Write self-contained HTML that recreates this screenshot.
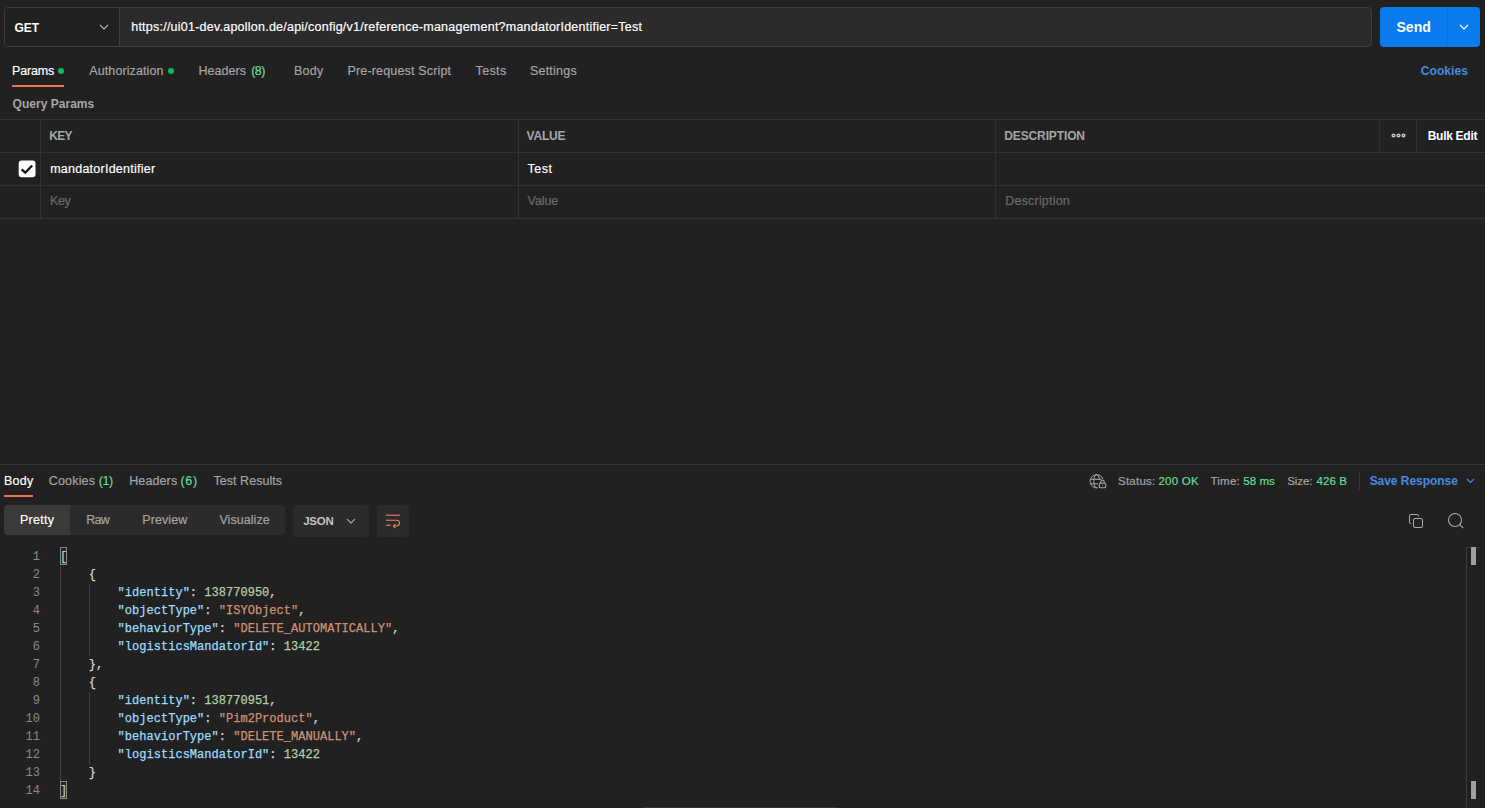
<!DOCTYPE html>
<html lang="en"><head><meta charset="utf-8"><title>Postman</title>
<style>
*{box-sizing:border-box;margin:0;padding:0}
html,body{width:1485px;height:808px;background:#212121;overflow:hidden}
body{position:relative;font-family:"Liberation Sans", sans-serif;font-size:12px;color:#ffffff}
.t{position:absolute;white-space:pre;line-height:20px;height:20px}
.a{position:absolute}
.hl{position:absolute;height:1px;background:#323232}
.vl{position:absolute;width:1px;background:#323232}
.ln{position:absolute;left:0;width:40px;text-align:right;font-family:"Liberation Mono", monospace;font-size:12px;line-height:18px;height:18px;color:#8a8a8a}
.cl{position:absolute;white-space:pre;font-family:"Liberation Mono", monospace;font-size:12px;line-height:18px;height:18px;letter-spacing:0.025px;-webkit-text-stroke-width:0.25px}
.ig{position:absolute;width:1px;background:#404040}
.bm{position:absolute;width:7px;height:18px;border:1px solid #888;background:rgba(0,100,0,.1)}
svg{position:absolute;overflow:visible}
</style></head>
<body>

<!-- method selector + url bar -->
<div class="a" style="left:4px;top:7px;width:1368px;height:40px;border:1px solid #3d3d3d;border-radius:4px;background:#2b2b2b"></div>
<div class="a" style="left:5px;top:8px;width:114px;height:38px;border-radius:3px 0 0 3px;background:#212121"></div>
<div class="vl" style="left:119px;top:8px;height:38px;background:#3d3d3d"></div>
<svg style="left:99px;top:24px" width="10" height="7" viewBox="0 0 10 7"><path d="M1 1 L5 5 L9 1" fill="none" stroke="#b8b8b8" stroke-width="1.1"/></svg>
<!-- send button -->
<div class="a" style="left:1380px;top:7px;width:100px;height:40px;border-radius:4px;background:#097bed"></div>
<div class="vl" style="left:1447px;top:7px;height:40px;background:#0a72dc"></div>
<svg style="left:1459px;top:24px" width="10" height="7" viewBox="0 0 10 7"><path d="M1 1 L5 5 L9 1" fill="none" stroke="#ffffff" stroke-width="1.15"/></svg>
<!-- request tabs -->
<div class="a" style="left:58px;top:67.9px;width:6.2px;height:6.2px;border-radius:50%;background:#0cbb52"></div>
<div class="a" style="left:168px;top:67.9px;width:6.2px;height:6.2px;border-radius:50%;background:#0cbb52"></div>
<div class="a" style="left:12px;top:85px;width:52px;height:2px;background:#e8764d"></div>
<!-- params table -->
<div class="hl" style="left:0;top:119px;width:1485px"></div>
<div class="hl" style="left:0;top:152px;width:1485px"></div>
<div class="hl" style="left:0;top:185px;width:1485px"></div>
<div class="hl" style="left:0;top:218px;width:1485px"></div>
<div class="vl" style="left:40px;top:119px;height:99px"></div>
<div class="vl" style="left:518px;top:119px;height:99px"></div>
<div class="vl" style="left:995px;top:119px;height:99px"></div>
<div class="vl" style="left:1379px;top:119px;height:33px"></div>
<div class="vl" style="left:1416px;top:119px;height:33px"></div>
<svg style="left:1390.7px;top:133.1px" width="15" height="5" viewBox="0 0 15 5"><g fill="none" stroke="#c4c4c4" stroke-width="1.5"><circle cx="2.5" cy="2.5" r="1.35"/><circle cx="7.5" cy="2.5" r="1.35"/><circle cx="12.5" cy="2.5" r="1.35"/></g></svg>
<!-- checkbox -->
<svg style="left:18px;top:160px" width="19" height="19" viewBox="0 0 19 19"><rect x="0.7" y="0.6" width="16.8" height="16.7" rx="3" fill="#ffffff"/><path d="M3.6 9.3 L7.3 12.6 L14.2 5.5" fill="none" stroke="#151515" stroke-width="2.3"/></svg>
<!-- pane divider -->
<div class="hl" style="left:0;top:464px;width:1485px;background:#363636"></div>
<!-- response tabs -->
<div class="a" style="left:4px;top:495px;width:29px;height:2px;background:#e8764d"></div>
<!-- globe + lock -->
<svg style="left:1089px;top:473px" width="18" height="16" viewBox="0 0 18 16"><g fill="none" stroke="#a8a8a8" stroke-width="1.1">
<g transform="translate(0 0.4)" stroke-width="1"><path d="M8.85 14.4 A6.6 6.6 0 1 1 13.98 5.86"/>
<path d="M7.7 1.3 A2.9 6.6 0 0 0 7.7 14.5"/><path d="M7.7 1.3 A2.9 6.6 0 0 1 10.54 6.6"/>
<path d="M1.5 5.9 H12.6"/><path d="M1.7 10.4 H9"/></g>
<rect x="10.3" y="10.2" width="6.4" height="4.6" rx="1"/><path d="M11.8 10.2 V8.9 a1.7 1.7 0 0 1 3.4 0 V10.2"/></g>
<circle cx="13.5" cy="12.5" r="0.55" fill="#8c8c8c"/></svg>
<div class="vl" style="left:1359px;top:471px;height:19px;background:#363636"></div>
<svg style="left:1466px;top:478px" width="9" height="7" viewBox="0 0 9 7"><path d="M1 1 L4.5 4.5 L8 1" fill="none" stroke="#488ae2" stroke-width="1.2"/></svg>
<!-- view mode group -->
<div class="a" style="left:4px;top:505px;width:281px;height:30px;border-radius:4px;background:#2b2b2b"></div>
<div class="a" style="left:4px;top:505px;width:66px;height:30px;border-radius:4px 0 0 4px;background:#3a3a3a"></div>
<div class="a" style="left:293px;top:505px;width:76px;height:32px;border-radius:4px;background:#2b2b2b"></div>
<svg style="left:346px;top:518px" width="10" height="7" viewBox="0 0 10 7"><path d="M1 1 L5 5 L9 1" fill="none" stroke="#c4c4c4" stroke-width="1.05"/></svg>
<div class="a" style="left:377px;top:505px;width:32px;height:32px;border-radius:4px;background:#2b2b2b"></div>
<svg style="left:385px;top:514.2px" width="16" height="14" viewBox="0 0 16 14"><g fill="none" stroke="#ee8860" stroke-width="1.05">
<path d="M1 1.2 H15"/><path d="M1 6.2 H11.6 a2.9 2.9 0 0 1 0 5.8 H8.6"/><path d="M1 11.2 H5.6"/><path d="M10.6 9.8 L8.4 12 L10.6 14.2"/></g></svg>
<!-- copy + search -->
<svg style="left:1409px;top:514px" width="14" height="14" viewBox="0 0 14 14"><g fill="none" stroke="#ababab" stroke-width="1">
<rect x="4.5" y="4.5" width="9" height="9" rx="1.5"/><path d="M2.4 9.5 H1.8 a1.3 1.3 0 0 1 -1.3 -1.3 V1.8 a1.3 1.3 0 0 1 1.3 -1.3 H8.2 a1.3 1.3 0 0 1 1.3 1.3 V2.4"/></g></svg>
<svg style="left:1447px;top:512px" width="18" height="18" viewBox="0 0 18 18"><g fill="none" stroke="#ababab" stroke-width="1.05">
<circle cx="8" cy="8.05" r="6.5"/><path d="M12.7 12.7 L16.3 16.1"/></g></svg>
<!-- overview ruler -->
<div class="vl" style="left:1466px;top:547px;height:261px;background:#3a3a3a"></div>
<div class="hl" style="left:1466px;top:547px;width:14px;background:#333"></div>
<div class="a" style="left:1471px;top:547px;width:5px;height:18px;background:#a0a0a0"></div>
<div class="a" style="left:1471px;top:781px;width:5px;height:18px;background:#a0a0a0"></div>
<!-- horizontal scrollbar hint -->
<div class="a" style="left:643px;top:807px;width:195px;height:1px;background:#363636"></div>

<span class="t" style="left:14.48px;top:17.50px;font-size:12px;font-weight:700;color:#ffffff;letter-spacing:-0.084px">GET</span>
<span class="t" style="left:131.20px;top:17.00px;font-size:12.5px;font-weight:400;color:#ffffff;letter-spacing:0.236px;-webkit-text-stroke-width:0.18px">https://ui01-dev.apollon.de/api/config/v1/reference-management?mandatorIdentifier=Test</span>
<span class="t" style="left:1396.51px;top:17.00px;font-size:14px;font-weight:700;color:#ffffff;letter-spacing:0.013px">Send</span>
<span class="t" style="left:11.97px;top:60.50px;font-size:12.5px;font-weight:400;color:#ffffff;letter-spacing:-0.134px;-webkit-text-stroke-width:0.18px">Params</span>
<span class="t" style="left:89.32px;top:60.50px;font-size:12.5px;font-weight:400;color:#a6a6a6;letter-spacing:0.099px;-webkit-text-stroke-width:0.18px">Authorization</span>
<span class="t" style="left:198.52px;top:60.50px;font-size:12.5px;font-weight:400;color:#a6a6a6;letter-spacing:0.046px;-webkit-text-stroke-width:0.18px">Headers</span>
<span class="t" style="left:251.20px;top:60.50px;font-size:12.5px;font-weight:400;color:#6bdd9a;letter-spacing:-0.509px;-webkit-text-stroke-width:0.18px">(8)</span>
<span class="t" style="left:293.97px;top:60.50px;font-size:12.5px;font-weight:400;color:#a6a6a6;letter-spacing:0.278px;-webkit-text-stroke-width:0.18px">Body</span>
<span class="t" style="left:347.52px;top:60.50px;font-size:12.5px;font-weight:400;color:#a6a6a6;letter-spacing:0.163px;-webkit-text-stroke-width:0.18px">Pre-request Script</span>
<span class="t" style="left:475.60px;top:60.50px;font-size:12.5px;font-weight:400;color:#a6a6a6;letter-spacing:0.352px;-webkit-text-stroke-width:0.18px">Tests</span>
<span class="t" style="left:529.91px;top:60.50px;font-size:12.5px;font-weight:400;color:#a6a6a6;letter-spacing:0.226px;-webkit-text-stroke-width:0.18px">Settings</span>
<span class="t" style="left:1420.80px;top:60.50px;font-size:12px;font-weight:700;color:#488ae2;letter-spacing:0.078px">Cookies</span>
<span class="t" style="left:12.54px;top:93.50px;font-size:12px;font-weight:700;color:#a6a6a6;letter-spacing:0.029px">Query Params</span>
<span class="t" style="left:49.25px;top:125.80px;font-size:12px;font-weight:700;color:#a6a6a6;letter-spacing:-0.724px">KEY</span>
<span class="t" style="left:526.60px;top:125.80px;font-size:12px;font-weight:700;color:#a6a6a6;letter-spacing:-0.200px">VALUE</span>
<span class="t" style="left:1004.25px;top:125.80px;font-size:12px;font-weight:700;color:#a6a6a6;letter-spacing:-0.125px">DESCRIPTION</span>
<span class="t" style="left:1427.72px;top:125.80px;font-size:12px;font-weight:700;color:#ffffff;letter-spacing:-0.287px">Bulk Edit</span>
<span class="t" style="left:50.16px;top:158.50px;font-size:12.5px;font-weight:400;color:#ffffff;letter-spacing:0.245px;-webkit-text-stroke-width:0.18px">mandatorIdentifier</span>
<span class="t" style="left:527.60px;top:158.50px;font-size:12.5px;font-weight:400;color:#ffffff;letter-spacing:0.450px;-webkit-text-stroke-width:0.18px">Test</span>
<span class="t" style="left:49.97px;top:191.00px;font-size:12.5px;font-weight:400;color:#6b6b6b;letter-spacing:-0.334px;-webkit-text-stroke-width:0.18px">Key</span>
<span class="t" style="left:527.60px;top:191.00px;font-size:12.5px;font-weight:400;color:#6b6b6b;letter-spacing:-0.113px;-webkit-text-stroke-width:0.18px">Value</span>
<span class="t" style="left:1005.32px;top:191.00px;font-size:12.5px;font-weight:400;color:#6b6b6b;letter-spacing:0.188px;-webkit-text-stroke-width:0.18px">Description</span>
<span class="t" style="left:3.97px;top:470.50px;font-size:12.5px;font-weight:400;color:#ffffff;letter-spacing:0.278px;-webkit-text-stroke-width:0.18px">Body</span>
<span class="t" style="left:48.80px;top:470.50px;font-size:12.5px;font-weight:400;color:#a6a6a6;letter-spacing:0.167px;-webkit-text-stroke-width:0.18px">Cookies</span>
<span class="t" style="left:98.67px;top:470.50px;font-size:12.5px;font-weight:400;color:#6bdd9a;letter-spacing:-0.336px;-webkit-text-stroke-width:0.18px">(1)</span>
<span class="t" style="left:129.20px;top:470.50px;font-size:12.5px;font-weight:400;color:#a6a6a6;letter-spacing:0.117px;-webkit-text-stroke-width:0.18px">Headers</span>
<span class="t" style="left:180.40px;top:470.50px;font-size:12.5px;font-weight:400;color:#6bdd9a;letter-spacing:0.691px;-webkit-text-stroke-width:0.18px">(6)</span>
<span class="t" style="left:213.57px;top:470.50px;font-size:12.5px;font-weight:400;color:#a6a6a6;letter-spacing:0.030px;-webkit-text-stroke-width:0.18px">Test Results</span>
<span class="t" style="left:1118.06px;top:471.00px;font-size:11.5px;font-weight:400;color:#a6a6a6;letter-spacing:0.225px;-webkit-text-stroke-width:0.18px">Status:</span>
<span class="t" style="left:1158.40px;top:471.00px;font-size:11.5px;font-weight:400;color:#6bdd9a;letter-spacing:0.255px;-webkit-text-stroke-width:0.18px">200 OK</span>
<span class="t" style="left:1210.52px;top:471.00px;font-size:11.5px;font-weight:400;color:#a6a6a6;letter-spacing:0.216px;-webkit-text-stroke-width:0.18px">Time:</span>
<span class="t" style="left:1243.28px;top:471.00px;font-size:11.5px;font-weight:400;color:#6bdd9a;letter-spacing:0.058px;-webkit-text-stroke-width:0.18px">58 ms</span>
<span class="t" style="left:1287.20px;top:471.00px;font-size:11.5px;font-weight:400;color:#a6a6a6;letter-spacing:-0.048px;-webkit-text-stroke-width:0.18px">Size:</span>
<span class="t" style="left:1316.56px;top:471.00px;font-size:11.5px;font-weight:400;color:#6bdd9a;letter-spacing:0.110px;-webkit-text-stroke-width:0.18px">426 B</span>
<span class="t" style="left:1369.64px;top:470.50px;font-size:12px;font-weight:700;color:#488ae2;letter-spacing:-0.044px">Save Response</span>
<span class="t" style="left:20.00px;top:509.50px;font-size:12.5px;font-weight:400;color:#ffffff;letter-spacing:0.270px;-webkit-text-stroke-width:0.18px">Pretty</span>
<span class="t" style="left:86.32px;top:509.50px;font-size:12.5px;font-weight:400;color:#a6a6a6;letter-spacing:-0.788px;-webkit-text-stroke-width:0.18px">Raw</span>
<span class="t" style="left:142.32px;top:509.50px;font-size:12.5px;font-weight:400;color:#a6a6a6;letter-spacing:0.090px;-webkit-text-stroke-width:0.18px">Preview</span>
<span class="t" style="left:219.40px;top:509.50px;font-size:12.5px;font-weight:400;color:#a6a6a6;letter-spacing:0.062px;-webkit-text-stroke-width:0.18px">Visualize</span>
<span class="t" style="left:303.20px;top:511.00px;font-size:11.5px;font-weight:700;color:#c4c4c4;letter-spacing:-0.267px">JSON</span>
<div class="ln" style="top:548px">1</div>
<div class="cl" style="top:548px;left:60.00px"><span style="color:#d4d4d4">[</span></div>
<div class="ln" style="top:566px">2</div>
<div class="cl" style="top:566px;left:88.80px"><span style="color:#d4d4d4">{</span></div>
<div class="ln" style="top:584px">3</div>
<div class="cl" style="top:584px;left:117.60px"><span style="color:#9cdcfe">&quot;identity&quot;</span><span style="color:#d4d4d4">: </span><span style="color:#b5cea8">138770950</span><span style="color:#d4d4d4">,</span></div>
<div class="ln" style="top:602px">4</div>
<div class="cl" style="top:602px;left:117.60px"><span style="color:#9cdcfe">&quot;objectType&quot;</span><span style="color:#d4d4d4">: </span><span style="color:#ce9178">&quot;ISYObject&quot;</span><span style="color:#d4d4d4">,</span></div>
<div class="ln" style="top:620px">5</div>
<div class="cl" style="top:620px;left:117.60px"><span style="color:#9cdcfe">&quot;behaviorType&quot;</span><span style="color:#d4d4d4">: </span><span style="color:#ce9178">&quot;DELETE_AUTOMATICALLY&quot;</span><span style="color:#d4d4d4">,</span></div>
<div class="ln" style="top:638px">6</div>
<div class="cl" style="top:638px;left:117.60px"><span style="color:#9cdcfe">&quot;logisticsMandatorId&quot;</span><span style="color:#d4d4d4">: </span><span style="color:#b5cea8">13422</span></div>
<div class="ln" style="top:656px">7</div>
<div class="cl" style="top:656px;left:88.80px"><span style="color:#d4d4d4">},</span></div>
<div class="ln" style="top:674px">8</div>
<div class="cl" style="top:674px;left:88.80px"><span style="color:#d4d4d4">{</span></div>
<div class="ln" style="top:692px">9</div>
<div class="cl" style="top:692px;left:117.60px"><span style="color:#9cdcfe">&quot;identity&quot;</span><span style="color:#d4d4d4">: </span><span style="color:#b5cea8">138770951</span><span style="color:#d4d4d4">,</span></div>
<div class="ln" style="top:710px">10</div>
<div class="cl" style="top:710px;left:117.60px"><span style="color:#9cdcfe">&quot;objectType&quot;</span><span style="color:#d4d4d4">: </span><span style="color:#ce9178">&quot;Pim2Product&quot;</span><span style="color:#d4d4d4">,</span></div>
<div class="ln" style="top:728px">11</div>
<div class="cl" style="top:728px;left:117.60px"><span style="color:#9cdcfe">&quot;behaviorType&quot;</span><span style="color:#d4d4d4">: </span><span style="color:#ce9178">&quot;DELETE_MANUALLY&quot;</span><span style="color:#d4d4d4">,</span></div>
<div class="ln" style="top:746px">12</div>
<div class="cl" style="top:746px;left:117.60px"><span style="color:#9cdcfe">&quot;logisticsMandatorId&quot;</span><span style="color:#d4d4d4">: </span><span style="color:#b5cea8">13422</span></div>
<div class="ln" style="top:764px">13</div>
<div class="cl" style="top:764px;left:88.80px"><span style="color:#d4d4d4">}</span></div>
<div class="ln" style="top:782px">14</div>
<div class="cl" style="top:782px;left:60.00px"><span style="color:#d4d4d4">]</span></div>
<div class="ig" style="left:60px;top:566px;height:216px"></div>
<div class="ig" style="left:89px;top:584px;height:72px"></div>
<div class="ig" style="left:89px;top:692px;height:72px"></div>
<div class="bm" style="left:60px;top:547px"></div>
<div class="bm" style="left:60px;top:781px"></div>
</body></html>
